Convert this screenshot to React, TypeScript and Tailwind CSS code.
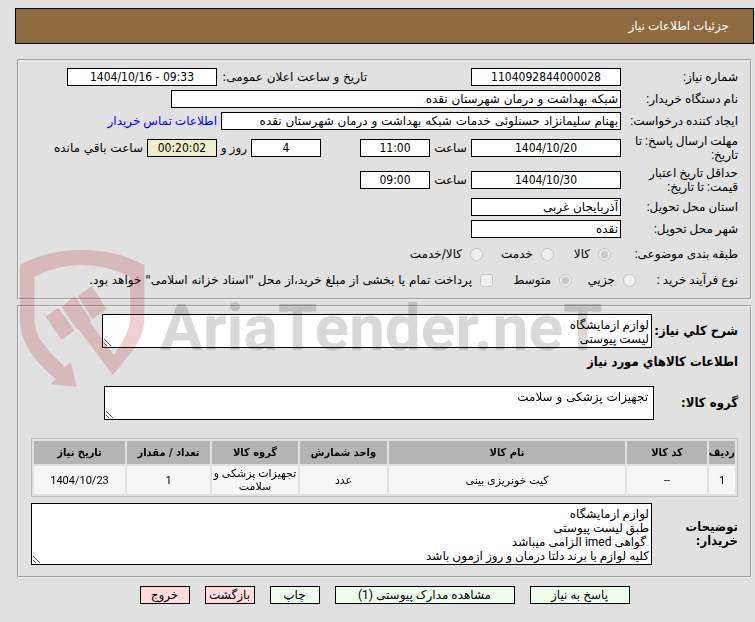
import type { ReactNode } from "react";

const field =
  "h-[18px] shrink-0 border border-black px-[2px] text-xs leading-4 text-black outline-none";

function Row({ height = "h-[22px]", children }: { height?: string; children: ReactNode }) {
  return <div className={`flex items-center ${height}`}>{children}</div>;
}

function Label({ htmlFor, children }: { htmlFor?: string; children: ReactNode }) {
  return (
    <label htmlFor={htmlFor} className="w-[117px] shrink-0 leading-[14px]">
      {children}
    </label>
  );
}

function TextField({
  id,
  value,
  width,
  center,
  tone = "bg-white",
}: {
  id: string;
  value: string;
  width: string;
  center?: boolean;
  tone?: string;
}) {
  return (
    <input
      id={id}
      type="text"
      readOnly
      dir={center ? "ltr" : "rtl"}
      defaultValue={value}
      className={`${field} ${width} ${center ? "text-center font-['DejaVu_Sans_Condensed','Roboto',sans-serif]" : "font-['DejaVu_Sans',sans-serif]"} ${tone}`}
    />
  );
}

function Choice({
  type = "radio",
  name,
  checked,
  width = "",
  children,
}: {
  type?: "radio" | "checkbox";
  name: string;
  checked?: boolean;
  width?: string;
  children: ReactNode;
}) {
  return (
    <label className={`flex shrink-0 items-center gap-2 whitespace-nowrap font-['DejaVu_Sans',sans-serif] ${width}`}>
      <input type={type} name={name} disabled defaultChecked={checked} className="size-[13px] shrink-0" />
      <span>{children}</span>
    </label>
  );
}

const columns = [
  { title: "رديف", value: "1", width: "w-[26px]" },
  { title: "کد کالا", value: "--", width: "w-[80px]" },
  { title: "نام کالا", value: "کیت خونریزی بینی", width: "" },
  { title: "واحد شمارش", value: "عدد", width: "w-[87px]" },
  { title: "گروه کالا", value: "تجهیزات پزشکی و سلامت", width: "w-[86px]" },
  { title: "تعداد / مقدار", value: "1", width: "w-[83px]" },
  { title: "تاریخ نیاز", value: "1404/10/23", width: "w-[91px]" },
];

const actions = [
  { title: "پاسخ به نیاز", style: "w-[100px] bg-[#eeffee]" },
  { title: "مشاهده مدارک پیوستی (1)", style: "w-[180px] bg-[#eeffee]" },
  { title: "چاپ", style: "w-[50px] bg-[#eeffee]" },
  { title: "بازگشت", style: "w-[50px] bg-[#ffdddd]" },
  { title: "خروج", style: "w-[50px] bg-[#ffdddd]" },
];

const panel = "border-2 border-[#f0f0f0] [border-style:groove] px-3";
const area = "block border border-black bg-white py-[3px] text-xs leading-[14px] text-black outline-none";
const strong = "font-['DejaVu_Sans_Condensed','DejaVu_Sans',sans-serif] text-[13px] font-bold";

function Watermark() {
  return (
    <div dir="ltr" className="pointer-events-none absolute left-0 top-0">
      <svg className="absolute left-[10px] top-[240px] h-[150px] w-[140px]" viewBox="0 0 420 450" aria-hidden="true">
        <g fill="#af1923" fillOpacity="0.2">
          <path d="M30 75Q110 30 215 30Q320 30 403 75V240C400 300 370 330 309 405L205 268L198 265L155 200L195 168L243 240L241 248L312 345C350 290 360 260 360 235V110Q290 75 215 75Q140 75 73 110V235C73 290 110 330 165 380L182 365L200 440L122 433L137 418C60 350 30 300 30 235Z" />
          <path d="M107 230L145 203L193 271L155 300Z" />
          <path d="M203 168L245 138L290 207L247 237Z" />
        </g>
      </svg>
      <span className="absolute left-[160px] top-[284px] whitespace-nowrap font-['Roboto',sans-serif] text-[64px] font-bold leading-[90px] text-black/15">
        AriaTender.neT
      </span>
    </div>
  );
}

export default function App() {
  return (
    <div
      dir="rtl"
      className="relative min-h-screen overflow-hidden bg-[#e1e1e1] pt-2 pb-[17px] font-['Roboto','DejaVu_Sans',sans-serif] text-xs text-black"
    >
      <header className="mr-px ml-[15px] flex h-9 items-center border border-black bg-[#8f6c3f] px-6 text-white">
        <h1>جزئیات اطلاعات نیاز</h1>
      </header>

      <main className="mr-[3px] ml-[17px] mt-[15px]">
        <section className={`${panel} pt-[5px] pb-[6px]`}>
          <Row>
            <Label htmlFor="number">شماره نیاز:</Label>
            <TextField id="number" value="1104092844000028" width="w-[150px]" center />
            <label
              htmlFor="announced"
              className="mr-[104px] w-[150px] shrink-0 whitespace-nowrap font-['DejaVu_Sans',sans-serif]"
            >
              تاریخ و ساعت اعلان عمومی:
            </label>
            <TextField id="announced" value="1404/10/16 - 09:33" width="w-[150px]" center />
          </Row>
          <Row>
            <Label htmlFor="buyer">نام دستگاه خریدار:</Label>
            <TextField id="buyer" value="شبکه بهداشت و درمان شهرستان نقده" width="w-[450px]" />
          </Row>
          <Row>
            <Label htmlFor="creator">ایجاد کننده درخواست:</Label>
            <TextField
              id="creator"
              value="بهنام سلیمانزاد حسنلوئی خدمات شبکه بهداشت و درمان شهرستان نقده"
              width="w-[400px]"
            />
            <a href="#contact" className="mr-1 whitespace-nowrap text-[#0000ff]">
              اطلاعات تماس خریدار
            </a>
          </Row>
          <Row height="h-8">
            <Label htmlFor="deadline">مهلت ارسال پاسخ: تا تاریخ:</Label>
            <TextField id="deadline" value="1404/10/20" width="w-[150px]" center />
            <label htmlFor="deadline-time" className="w-[41px] shrink-0 text-center">ساعت</label>
            <TextField id="deadline-time" value="11:00" width="w-[70px]" center />
            <span className="w-[39px] shrink-0" />
            <TextField id="days" value="4" width="w-[70px]" center />
            <label htmlFor="days" className="w-[34px] shrink-0 pr-1 whitespace-nowrap">روز و</label>
            <TextField id="remaining" value="00:20:02" width="w-[70px]" center tone="bg-[#eeeecc]" />
            <label htmlFor="remaining" className="mr-1 whitespace-nowrap font-['DejaVu_Sans',sans-serif]">
              ساعت باقي مانده
            </label>
          </Row>
          <Row height="h-8">
            <Label htmlFor="validity">حداقل تاریخ اعتبار قیمت: تا تاریخ:</Label>
            <TextField id="validity" value="1404/10/30" width="w-[150px]" center />
            <label htmlFor="validity-time" className="w-[41px] shrink-0 text-center">ساعت</label>
            <TextField id="validity-time" value="09:00" width="w-[70px]" center />
          </Row>
          <Row>
            <Label htmlFor="province">استان محل تحویل:</Label>
            <TextField id="province" value="آذربایجان غربی" width="w-[150px]" />
          </Row>
          <Row>
            <Label htmlFor="city">شهر محل تحویل:</Label>
            <TextField id="city" value="نقده" width="w-[150px]" />
          </Row>
          <Row height="h-7">
            <span className="w-[127px] shrink-0">طبقه بندی موضوعی:</span>
            <Choice name="category" checked width="w-[57px]">کالا</Choice>
            <Choice name="category" width="w-[71px]">خدمت</Choice>
            <Choice name="category">کالا/خدمت</Choice>
          </Row>
          <Row height="h-6">
            <span className="w-[102px] shrink-0">نوع فرآیند خرید :</span>
            <Choice name="process" width="w-[64px]">جزیي</Choice>
            <Choice name="process" checked width="w-[79px]">متوسط</Choice>
            <Choice type="checkbox" name="treasury">
              پرداخت تمام یا بخشی از مبلغ خرید،از محل "اسناد خزانه اسلامی" خواهد بود.
            </Choice>
          </Row>
        </section>

        <section className={`${panel} mt-[5px] pt-[7px] pb-[11px]`}>
          <div className="flex items-center">
            <label htmlFor="summary" className={`w-[86px] shrink-0 whitespace-nowrap ${strong}`}>شرح کلي نیاز:</label>
            <textarea
              id="summary"
              readOnly
              defaultValue={"لوازم ازمایشگاه\nلیست پیوستی"}
              className={`${area} h-[34px] w-[550px] px-[2px]`}
            />
          </div>
          <h2 className={`py-[6px] leading-4 ${strong}`}>اطلاعات کالاهاي مورد نیاز</h2>
          <div className="mt-[10px] flex items-center">
            <label htmlFor="group" className={`w-[84px] shrink-0 ${strong}`}>گروه کالا:</label>
            <textarea
              id="group"
              readOnly
              defaultValue="تجهیزات پزشکی و سلامت"
              className={`${area} h-[34px] w-[550px] px-[5px] font-['DejaVu_Sans',sans-serif]`}
            />
          </div>
          <table className="mt-[18px] w-full table-fixed border-separate border-spacing-[2px] border border-[#bebebe] text-center text-[11px] leading-[13px]">
            <thead>
              <tr className="h-[23px] bg-[#b4b4b4] font-['DejaVu_Sans_Condensed','DejaVu_Sans',sans-serif]">
                {columns.map((c) => (
                  <th key={c.title} className={`whitespace-nowrap p-0 font-bold ${c.width}`}>{c.title}</th>
                ))}
              </tr>
            </thead>
            <tbody>
              <tr className="h-7 bg-[#f7f7f7]">
                {columns.map((c) => (
                  <td key={c.title} className="p-0">{c.value}</td>
                ))}
              </tr>
            </tbody>
          </table>
          <div className="mt-[6px] flex items-center">
            <label htmlFor="notes" className={`w-[86px] shrink-0 leading-[14px] ${strong}`}>
              توضیحات
              <br />
              خریدار:
            </label>
            <textarea
              id="notes"
              readOnly
              defaultValue={"لوازم ازمایشگاه\nطبق لیست پیوستی\n گواهی imed الزامی میباشد\nکلیه لوازم با برند دلتا درمان و روز ازمون باشد"}
              className={`${area} h-[62px] min-w-0 flex-1 px-[2px]`}
            />
          </div>
        </section>

        <div className="mt-2 flex justify-center gap-[15px]">
          {actions.map((a) => (
            <button key={a.title} type="button" className={`h-[18px] whitespace-nowrap border border-black leading-4 ${a.style}`}>
              {a.title}
            </button>
          ))}
        </div>
      </main>
      <Watermark />
    </div>
  );
}
